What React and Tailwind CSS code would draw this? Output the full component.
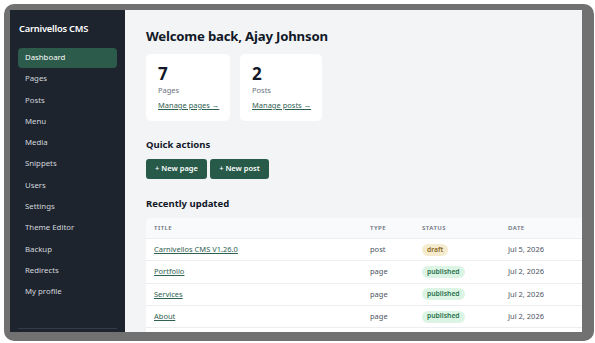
import React from "react";

const nav = ["Dashboard","Pages","Posts","Menu","Media","Snippets","Users","Settings","Theme Editor","Backup","Redirects","My profile"];
const rows = [
  { t: "Carnivellos CMS V1.26.0", type: "post", s: "draft", d: "Jul 5, 2026" },
  { t: "Portfolio", type: "page", s: "published", d: "Jul 2, 2026" },
  { t: "Services", type: "page", s: "published", d: "Jul 2, 2026" },
  { t: "About", type: "page", s: "published", d: "Jul 2, 2026" },
];

export default function App() {
  return (
    <div className="w-[595px] h-[343px] bg-white overflow-hidden" style={{ fontFamily: '"Noto Sans", "Open Sans", sans-serif' }}>
      <div className="ml-[4px] mt-[4px] w-[590px] h-[337px] rounded-[10px] bg-[#717171] pl-[6px] pt-[6px]">
        <div className="w-[572px] h-[322px] flex overflow-hidden">
          <aside className="w-[115px] shrink-0 bg-[#1d242e] px-[8px] pt-[12px] flex flex-col">
            <div className="text-white font-semibold text-[9.3px] leading-[14px] pl-[1px] tracking-[-0.2px]">Carnivellos CMS</div>
            <nav className="mt-[12px] flex flex-col gap-[1.27px]">
              {nav.map((n, i) => (
                <div key={n} className={`h-[20px] flex items-center pl-[7px] rounded-[4px] text-[7.8px] ${i === 0 ? "bg-[#2c5b4b] text-white" : "text-[#d2d6dc]"}`}>{n}</div>
              ))}
            </nav>
            <div className="mt-auto mb-[3px] border-t border-[#333c48]"></div>
          </aside>
          <main className="flex-1 bg-[#f3f4f6] pl-[21px] pt-[16px] overflow-hidden">
            <h1 className="text-[13.2px] leading-[20px] font-bold text-[#111827] tracking-[-0.2px]">Welcome back, Ajay Johnson</h1>
            <div className="flex gap-[10px] mt-[8px]">
              {[["7","Pages","Manage pages →",84],["2","Posts","Manage posts →",82]].map(([n,l,m,w]) => (
                <div key={l} className="h-[67px] bg-white rounded-[5px] pl-[12px] pt-[10px]" style={{ width: w }}>
                  <div className="text-[17px] leading-[20px] font-bold text-[#111827]">{n}</div>
                  <div className="text-[7.5px] leading-[11px] mt-[1px] text-[#6b7280]">{l}</div>
                  <div className="text-[7.5px] leading-[11px] mt-[4px] text-[#2f6152] underline">{m}</div>
                </div>
              ))}
            </div>
            <h2 className="mt-[17px] text-[9.5px] leading-[14px] font-bold text-[#111827]">Quick actions</h2>
            <div className="flex gap-[3px] mt-[7px]">
              <button className="h-[20px] w-[61px] rounded-[3px] bg-[#285a4a] text-white text-[7.5px] font-semibold">+ New page</button>
              <button className="h-[20px] w-[59px] rounded-[3px] bg-[#285a4a] text-white text-[7.5px] font-semibold">+ New post</button>
            </div>
            <h2 className="mt-[18px] text-[9.5px] leading-[14px] font-bold text-[#111827]">Recently updated</h2>
            <div className="mt-[7px] w-[440px] bg-white rounded-t-[5px]">
              <div className="h-[21px] grid grid-cols-[216px_52px_86px_1fr] items-center bg-[#f9fafb] rounded-t-[5px] border-b border-[#eceef1] text-[6px] font-semibold tracking-[0.5px] text-[#6b7280]">
                <div className="pl-[8px]">TITLE</div>
                <div className="pl-[8px]">TYPE</div>
                <div className="pl-[8px]">STATUS</div>
                <div className="pl-[8px]">DATE</div>
              </div>
              {rows.map((r) => (
                <div key={r.t} className="h-[22.3px] grid grid-cols-[216px_52px_86px_1fr] items-center border-b border-[#eceef1] text-[7.5px]">
                  <div className="pl-[8px] text-[#2f6152] underline">{r.t}</div>
                  <div className="pl-[8px] text-[#4b5563]">{r.type}</div>
                  <div className="pl-[8px]">
                    {r.s === "draft" ? (
                      <span className="inline-flex items-center h-[12px] px-[5px] rounded-full bg-[#f5ebcf] text-[#8a6a1e] text-[6.8px] font-semibold">draft</span>
                    ) : (
                      <span className="inline-flex items-center h-[12px] px-[5px] rounded-full bg-[#dcf4e4] text-[#26704a] text-[6.8px] font-semibold">published</span>
                    )}
                  </div>
                  <div className="pl-[8px] text-[#4b5563]">{r.d}</div>
                </div>
              ))}
              <div className="h-[10px]"></div>
            </div>
          </main>
        </div>
      </div>
    </div>
  );
}
